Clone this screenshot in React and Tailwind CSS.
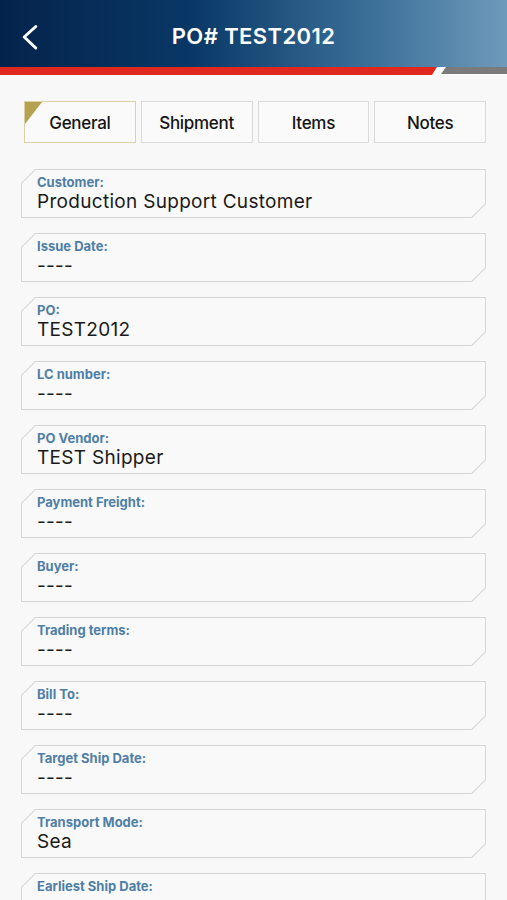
import React from "react";

const fields = [
  ["Customer:", "Production Support Customer"],
  ["Issue Date:", "----"],
  ["PO:", "TEST2012"],
  ["LC number:", "----"],
  ["PO Vendor:", "TEST Shipper"],
  ["Payment Freight:", "----"],
  ["Buyer:", "----"],
  ["Trading terms:", "----"],
  ["Bill To:", "----"],
  ["Target Ship Date:", "----"],
  ["Transport Mode:", "Sea"],
  ["Earliest Ship Date:", "----"],
];

const tabs = ["General", "Shipment", "Items", "Notes"];

function Field({ label, value }) {
  return (
    <div className="bg-[#d6d6d6] p-px [clip-path:polygon(14px_0,100%_0,100%_calc(100%-14px),calc(100%-14px)_100%,0_100%,0_14px)]">
      <div className="bg-[#f9f9f9] pl-[15px] pt-[4px] pb-[4px] [clip-path:polygon(13.6px_0,100%_0,100%_calc(100%-13.6px),calc(100%-13.6px)_100%,0_100%,0_13.6px)]">
        <div className="text-[13px] leading-[16px] font-bold text-[#4f7fa6]">{label}</div>
        <div className="text-[19px] leading-[23px] text-[#1a1a1a] tracking-[0.3px]">{value}</div>
      </div>
    </div>
  );
}

export default function App() {
  return (
    <div
      className="w-[507px] h-[900px] overflow-hidden bg-[#f8f8f8]"
      style={{ fontFamily: "Inter, 'Liberation Sans', sans-serif" }}
    >
      <div className="h-[67px] flex items-center relative bg-[linear-gradient(to_right,#04234b_0%,#093866_38%,#3a6e97_72%,#6e9abb_100%)]">
        <svg width="40" height="40" viewBox="0 0 40 40" className="ml-[10px] mt-[13px]">
          <polyline
            points="25.8,6.5 14.2,17 25.8,28"
            fill="none"
            stroke="white"
            strokeWidth="3"
            strokeLinecap="round"
            strokeLinejoin="round"
          />
        </svg>
        <div className="flex-1 text-center text-white text-[22px] font-semibold tracking-[0.4px] mr-[50px] mt-[6px]">
          PO# TEST2012
        </div>
      </div>
      <div className="h-[8px] flex bg-white">
        <div className="w-[437px] bg-[#e0281f] [clip-path:polygon(0_0,100%_0,calc(100%-5px)_100%,0_100%)]" />
        <div className="flex-1 ml-[4px] h-[7px] bg-[#7b7b7b] [clip-path:polygon(5px_0,100%_0,100%_100%,0_100%)]" />
      </div>

      <div className="px-[21px] pt-[26px]">
        <div className="flex gap-[5px] pl-[3px]">
          {tabs.map((t, i) => (
            <div
              key={t}
              className={
                "relative flex-1 h-[42px] flex items-center justify-center pt-[4px] text-[17px] tracking-[-0.3px] font-medium text-[#141414] bg-[#fafafa] border " +
                (i === 0 ? "border-[#dcd1a2]" : "border-[#d9d9d9]")
              }
            >
              {i === 0 && (
                <div className="absolute left-0 top-0 w-[17px] h-[22px] bg-[#b6a14e] [clip-path:polygon(0_0,100%_0,0_100%)]" />
              )}
              {t}
            </div>
          ))}
        </div>

        <div className="flex flex-col gap-[15px] mt-[26px]">
          {fields.map(([l, v]) => (
            <Field key={l} label={l} value={v} />
          ))}
        </div>
      </div>
    </div>
  );
}
